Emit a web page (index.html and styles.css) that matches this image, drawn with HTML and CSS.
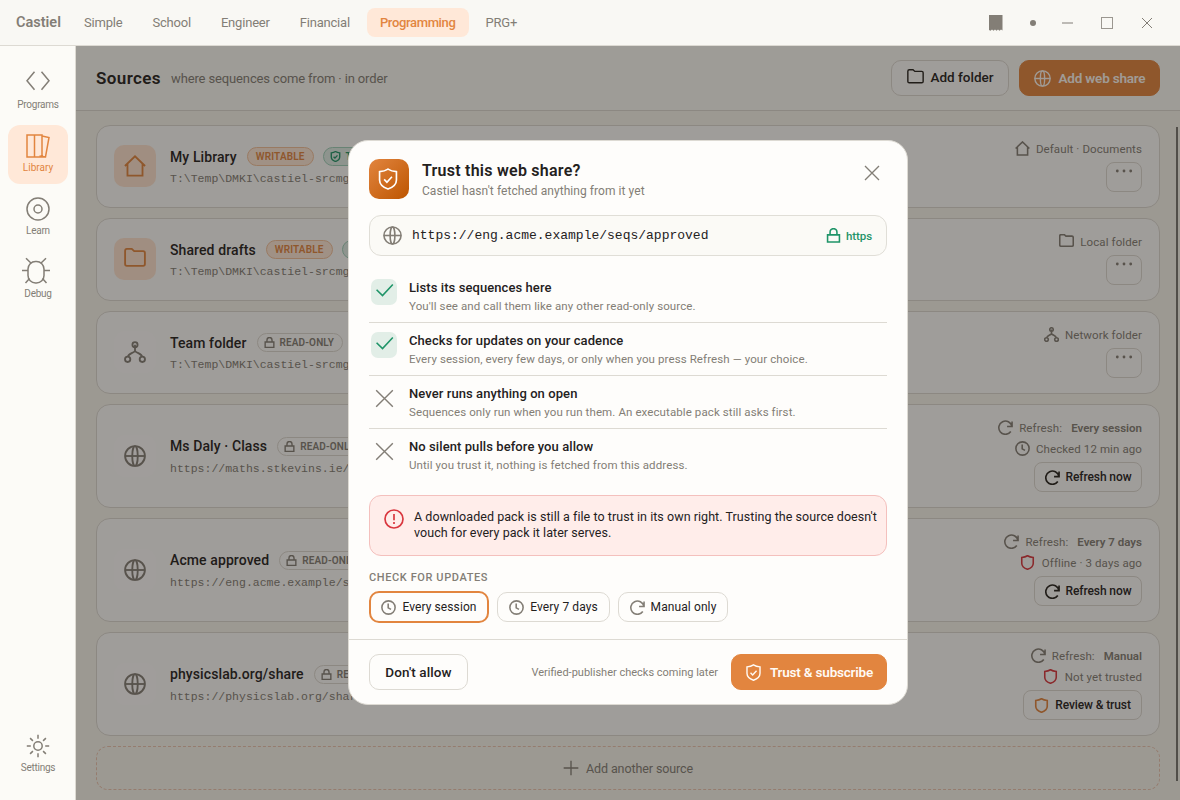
FILE: index.html
```html
<!DOCTYPE html>
<html lang="en">

<head>
    <meta charset="UTF-8">
    <meta name="viewport" content="width=device-width, initial-scale=1.0">
    <title>Castiel - Sources</title>
    <link rel="stylesheet" href="styles.css">
</head>

<body>
    <!-- icon set -->
    <svg class="icon-defs" xmlns="http://www.w3.org/2000/svg">
        <symbol id="i-code" viewBox="0 0 24 24"><path d="M8.500 .8L1 9.800l7.500 9M15.500 .8L23 9.800l-7.500 9"/></symbol>
        <symbol id="i-books" viewBox="0 0 24 24"><path d="M1 1h7.500v22H1zM8.500 1H16v22H8.500zM16 2l7 1.500-3.500 19.500-6-1"/></symbol>
        <symbol id="i-target" viewBox="0 0 24 24"><circle cx="12" cy="12" r="11"/><circle cx="12" cy="12" r="4"/></symbol>
        <symbol id="i-bug" viewBox="0 0 30 28"><rect x="7" y="4.500" width="16" height="21.500" rx="7.500"/><path d="M5 1.200l5.200 5M25 1.200l-5.200 5M1 13.500h6M23 13.500h6M8.500 21.500l-4 4.500M21.500 21.500l4 4.500"/></symbol>
        <symbol id="i-sun" viewBox="0 0 24 24"><circle cx="12" cy="12" r="4.200"/><path d="M12 .8v4M12 19.200v4M.8 12h4M19.200 12h4M4.100 4.100l2.800 2.800M17.100 17.100l2.800 2.800M4.100 19.900l2.800-2.800M17.100 6.900l2.800-2.800"/></symbol>
        <symbol id="i-home" viewBox="0 0 24 24"><path d="M1 12L12 1.500 23 12M3.800 9.500v13h16.400v-13"/></symbol>
        <symbol id="i-folder" viewBox="0 0 24 24"><path d="M1.200 3.200c0-1.300.8-2.200 2-2.200h5.300l2.600 2.400h9.700c1.300 0 2 .8 2 2v12.100c0 1.300-.8 2-2 2H3.200c-1.200 0-2-.8-2-2z"/></symbol>
        <symbol id="i-network" viewBox="0 0 24 24"><circle cx="12" cy="4" r="2.800"/><circle cx="4" cy="20" r="2.900"/><circle cx="20" cy="20" r="2.900"/><path d="M12 4v7M4.500 17c0-3 5-3.500 7.500-6 2.500 2.500 7.500 3 7.500 6"/></symbol>
        <symbol id="i-globe" viewBox="0 0 24 24"><circle cx="12" cy="12" r="10.800"/><ellipse cx="12" cy="12" rx="3" ry="10.800"/><path d="M1 12h22"/></symbol>
        <symbol id="i-lock" viewBox="0 0 24 24"><path d="M2.500 11h19v11.500h-19zM6.500 11V6.500a5.500 5.500 0 0 1 11 0V11"/></symbol>
        <symbol id="i-shield" viewBox="0 0 24 24"><path d="M12 1.200c3 2 6 2.600 9.200 2.800v9c0 5-4 8-9.200 9.900C6.800 21 2.800 18 2.800 13V4C6 3.800 9 3.200 12 1.200z"/></symbol>
        <symbol id="i-shield-check" viewBox="0 0 24 24"><path d="M12 1.200c3 2 6 2.600 9.200 2.800v9c0 5-4 8-9.200 9.900C6.800 21 2.800 18 2.800 13V4C6 3.800 9 3.200 12 1.200zM7.800 12.500l3 3 5.500-6"/></symbol>
        <symbol id="i-clock" viewBox="0 0 24 24"><circle cx="12" cy="12" r="10.600"/><path d="M11.500 5.500v7l4.500 2.500"/></symbol>
        <symbol id="i-refresh" viewBox="0 0 24 24"><path d="M22.500 2.500v8h-8M22.300 10.300A10.600 10.600 0 1 0 20.500 18.500"/></symbol>
        <symbol id="i-check" viewBox="0 0 24 24"><path d="M2 11l7.500 7.500L22.500 4.500"/></symbol>
        <symbol id="i-x" viewBox="0 0 24 24"><path d="M1.500 1.500l21 21M22.500 1.500l-21 21"/></symbol>
        <symbol id="i-plus" viewBox="0 0 24 24"><path d="M12 1v22M1 12h22"/></symbol>
        <symbol id="i-alert" viewBox="0 0 24 24"><circle cx="12" cy="12" r="10.800"/><path d="M12 6v7.500M12 15.500v2.500"/></symbol>
        <symbol id="i-dots" viewBox="0 0 18 4"><circle cx="2.300" cy="2" r="1.400"/><circle cx="9" cy="2" r="1.400"/><circle cx="15.700" cy="2" r="1.400"/></symbol>
    </svg>

    <header class="topbar">
        <div class="brand">Castiel</div>
        <nav class="tabs">
            <a class="tab">Simple</a>
            <a class="tab">School</a>
            <a class="tab">Engineer</a>
            <a class="tab">Financial</a>
            <a class="tab active">Programming</a>
            <a class="tab">PRG+</a>
        </nav>
        <div class="window-controls">
            <svg class="wc-note" viewBox="0 0 14 16"><path d="M0 0h13.500v15.500l-1.500-1-1.500 1.300-1.500-1.300-1.500 1.300-1.500-1.300-1.500 1.300-1.500-1.300L1.500 15.800 0 15z"/></svg>
            <span class="wc-dot"></span>
            <span class="wc-min"></span>
            <span class="wc-max"></span>
            <svg class="wc-close" viewBox="0 0 10 10"><path d="M0 0l10 10M10 0L0 10"/></svg>
        </div>
    </header>

    <div class="shell">
        <aside class="rail">
            <a class="rail-item"><svg class="icon"><use href="#i-code"/></svg><span>Programs</span></a>
            <a class="rail-item active"><svg class="icon"><use href="#i-books"/></svg><span>Library</span></a>
            <a class="rail-item"><svg class="icon"><use href="#i-target"/></svg><span>Learn</span></a>
            <a class="rail-item"><svg class="icon bug"><use href="#i-bug"/></svg><span>Debug</span></a>
            <a class="rail-item bottom"><svg class="icon"><use href="#i-sun"/></svg><span>Settings</span></a>
        </aside>

        <main class="main">
            <div class="page-header">
                <h1>Sources</h1>
                <span class="subtitle">where sequences come from · in order</span>
                <button class="btn add-folder"><svg class="icon"><use href="#i-folder"/></svg>Add folder</button>
                <button class="btn primary add-share"><svg class="icon"><use href="#i-globe"/></svg>Add web share</button>
            </div>

            <div class="source-list">
                <div class="source">
                    <div class="tile warm"><svg class="icon"><use href="#i-home"/></svg></div>
                    <div class="info">
                        <div class="name-row"><span class="name">My Library</span><span class="badge writable">WRITABLE</span><span class="badge trusted"><svg class="icon"><use href="#i-shield-check"/></svg>TRUSTED</span></div>
                        <div class="path">T:\Temp\DMKI\castiel-srcmgr</div>
                    </div>
                    <div class="meta">
                        <div class="meta-row"><svg class="icon"><use href="#i-home"/></svg>Default · Documents</div>
                        <button class="more"><svg><use href="#i-dots"/></svg></button>
                    </div>
                </div>

                <div class="source">
                    <div class="tile warm"><svg class="icon"><use href="#i-folder"/></svg></div>
                    <div class="info">
                        <div class="name-row"><span class="name">Shared drafts</span><span class="badge writable">WRITABLE</span><span class="badge trusted"><svg class="icon"><use href="#i-shield-check"/></svg>TRUSTED</span></div>
                        <div class="path">T:\Temp\DMKI\castiel-srcmgr</div>
                    </div>
                    <div class="meta">
                        <div class="meta-row"><svg class="icon"><use href="#i-folder"/></svg>Local folder</div>
                        <button class="more"><svg><use href="#i-dots"/></svg></button>
                    </div>
                </div>

                <div class="source">
                    <div class="tile"><svg class="icon"><use href="#i-network"/></svg></div>
                    <div class="info">
                        <div class="name-row"><span class="name">Team folder</span><span class="badge"><svg class="icon"><use href="#i-lock"/></svg>READ-ONLY</span></div>
                        <div class="path">T:\Temp\DMKI\castiel-srcmgr</div>
                    </div>
                    <div class="meta">
                        <div class="meta-row"><svg class="icon"><use href="#i-network"/></svg>Network folder</div>
                        <button class="more"><svg><use href="#i-dots"/></svg></button>
                    </div>
                </div>

                <div class="source tall">
                    <div class="tile"><svg class="icon"><use href="#i-globe"/></svg></div>
                    <div class="info">
                        <div class="name-row"><span class="name">Ms Daly · Class</span><span class="badge"><svg class="icon"><use href="#i-lock"/></svg>READ-ONLY</span></div>
                        <div class="path">https://maths.stkevins.ie/seqs</div>
                    </div>
                    <div class="meta">
                        <div class="meta-row"><svg class="icon"><use href="#i-refresh"/></svg>Refresh: <b>Every session</b></div>
                        <div class="meta-row"><svg class="icon"><use href="#i-clock"/></svg>Checked 12 min ago</div>
                        <button class="btn small"><svg class="icon"><use href="#i-refresh"/></svg>Refresh now</button>
                    </div>
                </div>

                <div class="source tall">
                    <div class="tile"><svg class="icon"><use href="#i-globe"/></svg></div>
                    <div class="info">
                        <div class="name-row"><span class="name">Acme approved</span><span class="badge"><svg class="icon"><use href="#i-lock"/></svg>READ-ONLY</span></div>
                        <div class="path">https://eng.acme.example/seqs</div>
                    </div>
                    <div class="meta">
                        <div class="meta-row"><svg class="icon"><use href="#i-refresh"/></svg>Refresh: <b>Every 7 days</b></div>
                        <div class="meta-row"><svg class="icon danger"><use href="#i-shield"/></svg>Offline · 3 days ago</div>
                        <button class="btn small"><svg class="icon"><use href="#i-refresh"/></svg>Refresh now</button>
                    </div>
                </div>

                <div class="source tall">
                    <div class="tile"><svg class="icon"><use href="#i-globe"/></svg></div>
                    <div class="info">
                        <div class="name-row"><span class="name">physicslab.org/share</span><span class="badge"><svg class="icon"><use href="#i-lock"/></svg>READ-ONLY</span></div>
                        <div class="path">https://physicslab.org/share</div>
                    </div>
                    <div class="meta">
                        <div class="meta-row"><svg class="icon"><use href="#i-refresh"/></svg>Refresh: <b>Manual</b></div>
                        <div class="meta-row"><svg class="icon danger"><use href="#i-shield"/></svg>Not yet trusted</div>
                        <button class="btn small review"><svg class="icon accent"><use href="#i-shield"/></svg>Review &amp; trust</button>
                    </div>
                </div>

                <div class="add-source"><svg class="icon"><use href="#i-plus"/></svg>Add another source</div>
            </div>
            <div class="scroll-thumb"></div>

            <div class="overlay">
                <div class="modal">
                    <div class="modal-body">
                        <div class="modal-head">
                            <div class="modal-icon"><svg class="icon"><use href="#i-shield-check"/></svg></div>
                            <div class="modal-titles">
                                <h2>Trust this web share?</h2>
                                <p>Castiel hasn't fetched anything from it yet</p>
                            </div>
                            <svg class="icon modal-close"><use href="#i-x"/></svg>
                        </div>

                        <div class="url-box">
                            <svg class="icon"><use href="#i-globe"/></svg>
                            <span class="url">https://eng.acme.example/seqs/approved</span>
                            <span class="secure"><svg class="icon"><use href="#i-lock"/></svg>https</span>
                        </div>

                        <ul class="facts">
                            <li>
                                <div class="mark yes"><svg class="icon"><use href="#i-check"/></svg></div>
                                <div><h3>Lists its sequences here</h3><p>You'll see and call them like any other read-only source.</p></div>
                            </li>
                            <li>
                                <div class="mark yes"><svg class="icon"><use href="#i-check"/></svg></div>
                                <div><h3>Checks for updates on your cadence</h3><p>Every session, every few days, or only when you press Refresh — your choice.</p></div>
                            </li>
                            <li>
                                <div class="mark"><svg class="icon"><use href="#i-x"/></svg></div>
                                <div><h3>Never runs anything on open</h3><p>Sequences only run when you run them. An executable pack still asks first.</p></div>
                            </li>
                            <li>
                                <div class="mark"><svg class="icon"><use href="#i-x"/></svg></div>
                                <div><h3>No silent pulls before you allow</h3><p>Until you trust it, nothing is fetched from this address.</p></div>
                            </li>
                        </ul>

                        <div class="warning">
                            <svg class="icon"><use href="#i-alert"/></svg>
                            <p>A downloaded pack is still a file to trust in its own right. Trusting the source doesn't<br>vouch for every pack it later serves.</p>
                        </div>

                        <div class="label">CHECK FOR UPDATES</div>
                        <div class="chips">
                            <button class="chip selected"><svg class="icon"><use href="#i-clock"/></svg>Every session</button>
                            <button class="chip"><svg class="icon"><use href="#i-clock"/></svg>Every 7 days</button>
                            <button class="chip"><svg class="icon"><use href="#i-refresh"/></svg>Manual only</button>
                        </div>
                    </div>

                    <div class="modal-footer">
                        <button class="btn deny">Don't allow</button>
                        <span class="note">Verified-publisher checks coming later</span>
                        <button class="btn primary trust"><svg class="icon"><use href="#i-shield-check"/></svg>Trust &amp; subscribe</button>
                    </div>
                </div>
            </div>
        </main>
    </div>
</body>

</html>
```
FILE: styles.css
```css
* {
    margin: 0;
    padding: 0;
    box-sizing: border-box;
}

body {
    font-family: Roboto, "Liberation Sans", sans-serif;
    font-size: 13px;
    color: #24211d;
    background: #f9f8f4;
    height: 100vh;
    display: flex;
    flex-direction: column;
    overflow: hidden;
}

button {
    font-family: inherit;
    color: #24211d;
}

.icon-defs {
    display: none;
}

.icon {
    width: 16px;
    height: 16px;
    flex: none;
    fill: none;
    stroke: currentColor;
    stroke-width: 2;
}

/* top bar */
.topbar {
    height: 46px;
    flex: none;
    display: flex;
    align-items: center;
    padding: 0 28px 1px 16px;
    border-bottom: 1px solid #dddad3;
    color: #837e76;
}

.brand {
    width: 55px;
    font-size: 14.5px;
    font-weight: 600;
}

.tabs {
    display: flex;
    gap: 4px;
}

.tab {
    padding: 0 13px;
    line-height: 29px;
    border-radius: 8px;
    letter-spacing: -0.2px;
}

.tab.active {
    background: #ffe8d8;
    color: #e2853f;
    font-weight: 500;
    letter-spacing: -0.35px;
}

.window-controls {
    margin-left: auto;
    display: flex;
    align-items: center;
}

.wc-note {
    width: 14px;
    height: 16px;
    fill: #837e76;
    margin: 1px 27px 0 0;
}

.wc-dot {
    width: 6px;
    height: 6px;
    border-radius: 50%;
    background: #837e76;
    margin: 1px 26px 0 0;
}

.wc-min {
    width: 11px;
    height: 2px;
    background: #bdbab5;
    margin: 2px 28px 0 0;
}

.wc-max {
    width: 12px;
    height: 12px;
    border: 1px solid #9b9790;
    margin: 1px 29px 0 0;
}

.wc-close {
    width: 10px;
    height: 10px;
    margin-top: 1px;
    stroke: #837e76;
    stroke-width: 1;
}

/* layout */
.shell {
    flex: 1;
    display: flex;
    min-height: 0;
}

.rail {
    width: 76px;
    flex: none;
    display: flex;
    flex-direction: column;
    gap: 4px;
    padding: 16px 7px 16px 8px;
    background: #fcfbf7;
    border-right: 1px solid #dddad3;
}

.rail-item {
    height: 59px;
    display: flex;
    flex-direction: column;
    align-items: center;
    gap: 4.5px;
    padding-top: 8.5px;
    border-radius: 12px;
    color: #837e76;
    font-size: 10px;
    letter-spacing: -0.25px;
}

.rail-item .icon {
    width: 24px;
    height: 24px;
    stroke-width: 1.5;
}

.rail-item .bug {
    width: 30px;
    height: 28px;
    margin: -2.5px 5px -1.5px 0;
}

.rail-item.active {
    background: #ffe8d8;
    color: #e2853f;
    letter-spacing: 0;
}

.rail-item.bottom {
    margin-top: auto;
}

.main {
    flex: 1;
    position: relative;
    min-width: 0;
    display: flex;
    flex-direction: column;
    background: #f8f6ee;
}

.page-header {
    height: 65px;
    flex: none;
    display: flex;
    align-items: center;
    padding: 0 20px;
    background: #fcfbf7;
    border-bottom: 1px solid #dddad3;
}

.page-header h1 {
    font-size: 17px;
    font-weight: 600;
    letter-spacing: 0.4px;
    width: 75px;
}

.subtitle {
    flex: 1;
    color: #837e76;
    letter-spacing: -0.13px;
}

/* buttons */
.btn {
    height: 36px;
    display: flex;
    align-items: center;
    justify-content: center;
    gap: 7px;
    border: 1px solid #dddad3;
    border-radius: 10px;
    background: #fefdfb;
    font-size: 13.5px;
    font-weight: 500;
    white-space: nowrap;
}

.btn.primary {
    gap: 8px;
    background: #e2853f;
    border-color: #e2853f;
    color: #fffaf4;
    font-weight: 600;
    letter-spacing: -0.2px;
}

.btn .icon {
    width: 17px;
    height: 17px;
}

.btn.small {
    width: 108px;
    height: 30px;
    gap: 6px;
    border-radius: 8px;
    font-size: 12px;
    letter-spacing: -0.1px;
}

.btn.small .icon {
    width: 15px;
    height: 15px;
    stroke-width: 2.6;
}

.btn.review {
    width: 119px;
}

.add-folder {
    width: 118px;
    margin-right: 10px;
    padding-bottom: 2px;
}

.add-share {
    width: 141px;
}

/* source list */
.source-list {
    display: flex;
    flex-direction: column;
    gap: 10px;
    padding: 14px 20px 0;
}

.source {
    height: 83px;
    flex: none;
    display: flex;
    align-items: center;
    gap: 14px;
    padding: 0 17px;
    background: #fefdfb;
    border: 1px solid #dddad3;
    border-radius: 14px;
}

.source.tall {
    height: 104px;
}

.tile {
    width: 42px;
    height: 42px;
    display: flex;
    align-items: center;
    justify-content: center;
    margin-bottom: 1px;
    border-radius: 10px;
    background: #fffdfd;
    color: #837e76;
}

.tile.warm {
    background: #ffe4d0;
    color: #e2853f;
}

.tile .icon {
    width: 22px;
    height: 22px;
    stroke-width: 2;
}

.info {
    flex: 1;
    min-width: 0;
}

.name-row {
    display: flex;
    align-items: center;
    gap: 9px;
    height: 19px;
}

.name {
    font-size: 14px;
    font-weight: 500;
    letter-spacing: 0.1px;
    margin-right: 1px;
}

.badge {
    height: 19px;
    display: flex;
    align-items: center;
    gap: 5px;
    padding: 0 8px 0 6px;
    border: 1px solid #dddad3;
    border-radius: 10px;
    color: #837e76;
    font-size: 10px;
    font-weight: 600;
    letter-spacing: 0.15px;
}

.badge .icon {
    width: 11px;
    height: 11px;
    stroke-width: 3;
}

.badge.writable {
    padding: 0 8px;
    background: #ffe8d8;
    border-color: #f3c29c;
    color: #e2853f;
}

.badge.trusted {
    background: #e0eee7;
    border-color: #9fd0bb;
    color: #1f9468;
}

.path {
    margin-top: 5px;
    font-family: "Liberation Mono", monospace;
    font-size: 11.5px;
    line-height: 15px;
    color: #837e76;
}

.meta {
    display: flex;
    flex-direction: column;
    align-items: flex-end;
    gap: 6px;
    color: #837e76;
    font-size: 11.5px;
}

.meta-row {
    height: 15px;
    display: flex;
    align-items: center;
    gap: 6px;
    letter-spacing: 0.1px;
}

.meta-row .icon {
    width: 15px;
    height: 15px;
    stroke-width: 2.5;
}

.meta-row b {
    font-weight: 600;
    letter-spacing: 0;
    margin-left: 3px;
}

.meta-row .danger {
    color: #d9363e;
    margin-right: 1px;
}

.btn .accent {
    color: #e2853f;
}

.more {
    width: 36px;
    height: 30px;
    display: flex;
    justify-content: center;
    padding-top: 6px;
    border: 1px solid #dddad3;
    border-radius: 8px;
    background: #fefdfb;
}

.more svg {
    width: 18px;
    height: 4px;
    fill: #837e76;
}

.add-source {
    height: 44px;
    display: flex;
    align-items: center;
    justify-content: center;
    gap: 7px;
    border: 1px dashed #ecc5b0;
    border-radius: 12px;
    color: #837e76;
    font-size: 12.5px;
    letter-spacing: -0.1px;
}

.add-source .icon {
    stroke-width: 2;
}

.scroll-thumb {
    position: absolute;
    top: 81px;
    right: 2px;
    width: 2px;
    height: 654px;
    background: #777570;
}

/* trust dialog */
.overlay {
    position: absolute;
    inset: 0;
    display: flex;
    align-items: center;
    justify-content: center;
    padding-bottom: 1px;
    background: rgba(28, 24, 18, 0.42);
}

.modal {
    width: 560px;
    height: 565px;
    display: flex;
    flex-direction: column;
    background: #fefdfb;
    border: 1px solid #dddad3;
    border-radius: 20px;
}

.modal-body {
    flex: 1;
    padding: 18px 20px 0;
}

.modal-head {
    display: flex;
    gap: 13px;
    height: 40px;
}

.modal-icon {
    width: 40px;
    height: 40px;
    display: flex;
    align-items: center;
    justify-content: center;
    border-radius: 10px;
    background: linear-gradient(135deg, #e2853f, #bd5500);
    color: #fff;
}

.modal-icon .icon {
    width: 22px;
    height: 22px;
    margin-right: 3px;
    stroke-width: 1.8;
}

.modal-titles {
    flex: 1;
}

.modal-titles h2 {
    font-size: 16px;
    line-height: 23px;
    font-weight: 600;
    letter-spacing: 0.25px;
}

.modal-titles p {
    margin-top: 1px;
    font-size: 12px;
    line-height: 16px;
    letter-spacing: 0.06px;
    color: #837e76;
}

.modal-close {
    margin: 6px 7px 0 0;
    color: #837e76;
}

.url-box {
    height: 41px;
    display: flex;
    align-items: center;
    gap: 10px;
    margin-top: 16px;
    padding: 0 14px 0 13px;
    background: #fbfaf6;
    border: 1px solid #e0ded7;
    border-radius: 12px;
}

.url-box .icon {
    width: 19px;
    height: 19px;
    color: #837e76;
}

.url {
    flex: 1;
    font-family: "Liberation Mono", monospace;
    font-size: 13px;
}

.secure {
    display: flex;
    align-items: center;
    gap: 5px;
    color: #1f9468;
    font-size: 11.5px;
    font-weight: 500;
    letter-spacing: -0.1px;
}

.url-box .secure .icon {
    width: 15px;
    height: 15px;
    stroke-width: 2.5;
    color: #1f9468;
}

.facts {
    list-style: none;
    margin-top: 14px;
}

.facts li {
    height: 53px;
    display: flex;
    gap: 12px;
    padding: 9px 2px 0;
    border-bottom: 1px solid #dddad3;
}

.facts li:last-child {
    border-bottom: none;
}

.mark {
    width: 26px;
    height: 26px;
    display: flex;
    align-items: center;
    justify-content: center;
    padding-top: 1px;
    border-radius: 7px;
    color: #837e76;
}

.mark.yes {
    padding-top: 0;
    background: #e2eee7;
    color: #1f9468;
}

.mark .icon {
    width: 19px;
    height: 19px;
    stroke-width: 1.8;
}

.mark.yes .icon {
    margin-bottom: 4px;
    stroke-width: 2;
}

.facts h3 {
    font-size: 13px;
    line-height: 17px;
    font-weight: 500;
    letter-spacing: 0.08px;
}

.facts p {
    margin-top: 2px;
    font-size: 11.5px;
    line-height: 16px;
    letter-spacing: 0.1px;
    color: #837e76;
}

.warning {
    height: 61px;
    display: flex;
    gap: 10px;
    margin-top: 13px;
    padding: 13px 0 0 14px;
    background: #ffedea;
    border: 1px solid #f4c0bd;
    border-radius: 12px;
}

.warning .icon {
    width: 20px;
    height: 20px;
    color: #d9363e;
}

.warning p {
    font-size: 12.5px;
    line-height: 16px;
    letter-spacing: 0.05px;
    white-space: nowrap;
}

.label {
    margin-top: 15px;
    font-size: 11px;
    line-height: 14px;
    font-weight: 500;
    letter-spacing: 0.6px;
    color: #837e76;
}

.chips {
    display: flex;
    align-items: center;
    gap: 8px;
    margin-top: 6px;
}

.chip {
    width: 113px;
    height: 30px;
    display: flex;
    align-items: center;
    justify-content: center;
    gap: 6px;
    border: 1px solid #dddad3;
    border-radius: 10px;
    background: #fefdfb;
    font-size: 12px;
    letter-spacing: 0.1px;
}

.chip:last-child {
    width: 110px;
}

.chip .icon {
    width: 15px;
    height: 15px;
    stroke-width: 2.5;
    color: #837e76;
}

.chip.selected {
    width: 120px;
    height: 32px;
    border: 2px solid #e2853f;
}

.modal-footer {
    height: 65px;
    display: flex;
    align-items: center;
    padding: 0 20px;
    border-top: 1px solid #dddad3;
}

.deny {
    width: 99px;
    letter-spacing: 0.1px;
}

.note {
    margin: 0 13px 0 auto;
    font-size: 11px;
    color: #837e76;
}

.trust {
    width: 156px;
}
```
